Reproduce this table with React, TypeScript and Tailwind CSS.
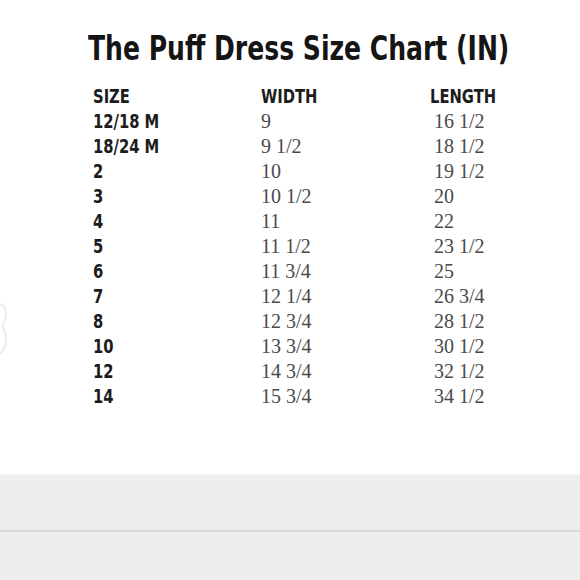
const rows: [string, string, string][] = [
  ["12/18 M", "9", "16 1/2"],
  ["18/24 M", "9 1/2", "18 1/2"],
  ["2", "10", "19 1/2"],
  ["3", "10 1/2", "20"],
  ["4", "11", "22"],
  ["5", "11 1/2", "23 1/2"],
  ["6", "11 3/4", "25"],
  ["7", "12 1/4", "26 3/4"],
  ["8", "12 3/4", "28 1/2"],
  ["10", "13 3/4", "30 1/2"],
  ["12", "14 3/4", "32 1/2"],
  ["14", "15 3/4", "34 1/2"],
];

// no narrow gothic installed, so squeeze the condensed face horizontally
const cond = "font-['DejaVu_Sans_Condensed',sans-serif] font-bold";
const serif = "font-['Liberation_Serif',serif]";

function Bold({ children }: { children: string }) {
  return (
    <div className={`${cond} whitespace-nowrap text-[20px] leading-[25px] text-[#1c1c1c]`}>
      <span className="inline-block origin-left scale-x-[0.82]">{children}</span>
    </div>
  );
}

export default function App() {
  return (
    <div className="flex h-[580px] w-[580px] flex-col overflow-hidden bg-white">
      <div className="relative flex h-[474px] flex-col">
        {/* faint edge of a hanger peeking in from the left */}
        <svg className="absolute left-0 top-[300px]" width="12" height="56" viewBox="0 0 12 56">
          <path d="M0 4 C6 6 8 14 4 22 C0 28 8 34 6 42 C5 48 2 52 0 54" fill="none" stroke="#ececec" strokeWidth="2" />
        </svg>

        <h1 className={`${cond} whitespace-nowrap pl-[88px] pt-[29px] text-[34px] leading-[38px] text-[#151515]`}>
          <span className="inline-block origin-left scale-x-[0.82]">The Puff Dress Size Chart (IN)</span>
        </h1>

        <div className="grid grid-cols-[168px_169px_1fr] pl-[93px] pt-[17px]">
          <Bold>SIZE</Bold>
          <Bold>WIDTH</Bold>
          <Bold>LENGTH</Bold>
          {rows.map(([s, w, l]) => (
            <div key={s} className="contents">
              <Bold>{s}</Bold>
              <div className={`${serif} text-[20px] leading-[25px] text-[#4a4a4a]`}>{w}</div>
              <div className={`${serif} pl-[4px] text-[20px] leading-[25px] text-[#4a4a4a]`}>{l}</div>
            </div>
          ))}
        </div>
      </div>

      <div className="h-[56px] border-t border-[#f4f4f4] bg-[#eeeeee]" />
      <div className="h-[2px] bg-[#d9d9d9]" />
      <div className="flex-1 bg-[#eeeeee]" />
    </div>
  );
}
